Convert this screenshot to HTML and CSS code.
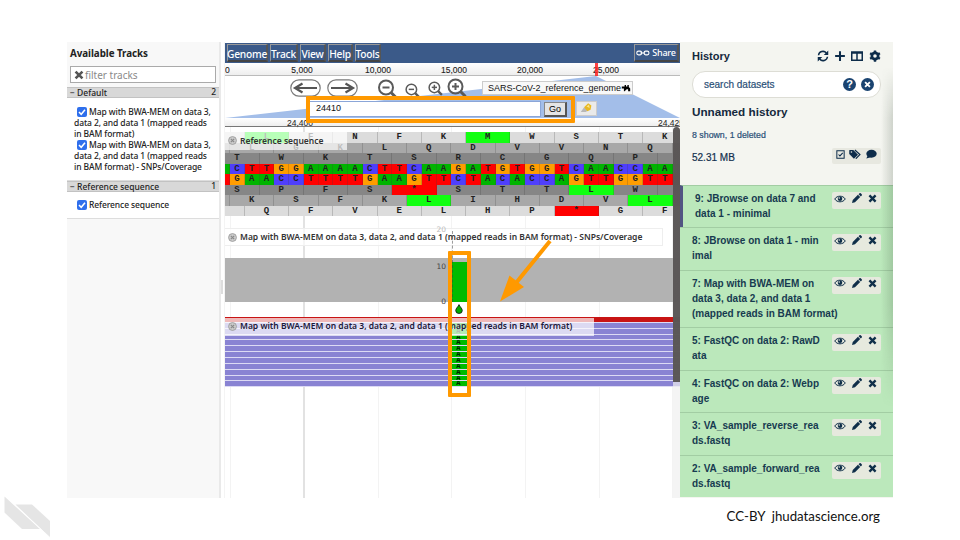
FILE: index.html
```
<!DOCTYPE html>
<html lang="en">
<head>
<meta charset="utf-8">
<title>JBrowse in Galaxy</title>
<link rel="stylesheet" href="styles.css">
</head>
<body>
<svg class="defs" width="0" height="0">
  <symbol id="eye" viewBox="0 0 24 16"><path d="M1.5 8C6 .5 18 .5 22.500 8C18 15.500 6 15.500 1.500 8Z" fill="none" stroke="currentColor" stroke-width="2"/><circle cx="12" cy="7.500" r="4.500"/><circle cx="10.500" cy="6" r="1.500" fill="#e6e9de"/></symbol>
  <symbol id="pen" viewBox="0 0 16 16"><path d="M0 16L1.200 11.200L9.500 2.900L13.100 6.500L4.800 14.800ZM10.500 1.900L12 .4Q13 -.4 14 .5L15.500 2Q16.400 3 15.600 4L14.100 5.500Z"/></symbol>
  <symbol id="times" viewBox="0 0 16 16"><path d="M2.500 2.500L13.500 13.500M13.500 2.500L2.500 13.500" stroke="currentColor" stroke-width="4.200"/></symbol>
  <symbol id="close" viewBox="0 0 16 16"><circle cx="8" cy="8" r="7" fill="#ccc" stroke="#999" stroke-width="1.500"/><path d="M5 5L11 11M11 5L5 11" stroke="#888" stroke-width="2"/></symbol>
  <symbol id="lens" viewBox="0 0 20 20"><circle cx="8.500" cy="8.500" r="7" fill="none" stroke="#5a5a5a" stroke-width="2"/><path d="M13.500 13.500L18.500 18.500" stroke="#5a5a5a" stroke-width="3"/><path d="M5 8.500H12" stroke="#5a5a5a" stroke-width="2"/></symbol>
  <symbol id="arrow" viewBox="0 0 31 18"><rect x=".8" y=".8" width="29.400" height="16.400" rx="8.200" fill="#fff" stroke="#7a7a7a" stroke-width="1.200"/><path d="M27 9H6M12.500 4.500L5 9L12.500 13.500" fill="none" stroke="#555" stroke-width="2.200"/></symbol>
</svg>
<main class="app">
  <aside class="tracks">
    <h2>Available Tracks</h2>
    <div class="filter"><svg class="x"><use href="#times"/></svg><span>filter tracks</span></div>
    <div class="cat"><span>− Default</span><b>2</b></div>
    <div class="list tall">
      <p><i class="check"><svg viewBox="0 0 10 10"><path d="M2 5L4.200 7.300L8 2.800"/></svg></i>Map with BWA-MEM on data 3,<br>data 2, and data 1 (mapped reads<br>in BAM format)</p>
      <p><i class="check"><svg viewBox="0 0 10 10"><path d="M2 5L4.200 7.300L8 2.800"/></svg></i>Map with BWA-MEM on data 3,<br>data 2, and data 1 (mapped reads<br>in BAM format) - SNPs/Coverage</p>
    </div>
    <div class="cat"><span>− Reference sequence</span><b>1</b></div>
    <div class="list short"><p><i class="check"><svg viewBox="0 0 10 10"><path d="M2 5L4.200 7.300L8 2.800"/></svg></i>Reference sequence</p></div>
  </aside>
  <div class="splitter"><i></i></div>
  <section class="browser">
    <nav class="menu">
      <span class="m1">Genome</span><span class="m2">Track</span><span class="m3">View</span><span class="m4">Help</span><span class="m5">Tools</span>
      <span class="share"><svg viewBox="0 0 26 12"><rect x="1.500" y="2.500" width="9" height="7" rx="3"/><rect x="15" y="2.500" width="9" height="7" rx="3"/><path d="M8 6H17"/></svg>Share</span>
    </nav>
    <div class="ruler"><span class="zero">0</span><span>5,000</span><span>10,000</span><span>15,000</span><span>20,000</span><span>25,000</span><i class="here"></i></div>
    <div class="nav">
      <svg class="fan" viewBox="0 0 455 42"><path d="M371 0L455 42H0Z"/></svg>
      <div class="controls">
        <svg class="pill"><use href="#arrow"/></svg><svg class="pill flip"><use href="#arrow"/></svg>
        <svg class="z1"><use href="#lens"/></svg><svg class="z2"><use href="#lens"/></svg>
        <svg class="z3" viewBox="0 0 20 20"><use href="#lens"/><path d="M8.500 5V12" stroke="#5a5a5a" stroke-width="2"/></svg>
        <svg class="z4" viewBox="0 0 20 20"><use href="#lens"/><path d="M8.500 5V12" stroke="#5a5a5a" stroke-width="2"/></svg>
        <div class="select">SARS-CoV-2_reference_genome<svg viewBox="0 0 12 10"><path d="M0 2H4V0H6V2H8V0H10V3L12 5V9H9V6H7L4 9H3V5H0Z"/></svg></div>
      </div>
      <div class="search"><div class="loc">24410</div><div class="go">Go</div><div class="marker"><svg viewBox="0 0 16 14"><path d="M1 12L5 6L10 10L7 12Z" fill="#b8b8b8"/><path d="M5 6L10 1L14 4L13 9L9 11Z" fill="#e8b820"/><path d="M8 5L11 3L12 7Z" fill="#fbe58a"/></svg></div></div>
    </div>
    <div class="scale"><span class="s1">24,400</span><span class="s2">24,425</span></div>
    <div class="view">
      <div class="seq" id="seq"></div>
      <div class="label ref"><svg><use href="#close"/></svg><span>Reference sequence</span></div>
      <div class="coverage"><i class="snp"></i></div>
      <div class="label cov"><svg><use href="#close"/></svg><span>Map with BWA-MEM on data 3, data 2, and data 1 (mapped reads in BAM format) - SNPs/Coverage</span></div>
      <span class="tick t20">20</span><span class="tick t10">10</span><span class="tick t0">0</span>
      <i class="axis"></i>
      <svg class="drop" viewBox="0 0 8 10"><path d="M4 .6C5 3 7.300 4.500 7.300 6.500A3.300 3 0 0 1 .7 6.500C.7 4.500 3 3 4 .6Z" fill="#0a0" stroke="#111" stroke-width=".8"/></svg>
      <div class="reads" id="reads"></div>
      <div class="label bam"><svg><use href="#close"/></svg><span>Map with BWA-MEM on data 3, data 2, and data 1 (mapped reads in BAM format)</span></div>
    </div>
    <i class="scroll"></i>
  </section>
  <aside class="history">
    <header><h2>History</h2>
      <svg class="h1" viewBox="0 0 16 16"><path d="M2 7A6 6 0 0 1 12.500 4M14 9A6 6 0 0 1 3.500 12" fill="none" stroke="currentColor" stroke-width="2"/><path d="M15 .8V6.800H9ZM1 15.200V9.200H7Z"/></svg>
      <svg class="h2" viewBox="0 0 16 16"><path d="M8 1.500V14.500M1.500 8H14.500" stroke="currentColor" stroke-width="2.700"/></svg>
      <svg class="h3" viewBox="0 0 16 14"><path d="M1 1.500H15V12.800H1ZM1 3H15M8 3V13" fill="none" stroke="currentColor" stroke-width="2"/></svg>
      <svg class="h4" viewBox="0 0 16 16"><circle cx="8" cy="8" r="4.200" fill="none" stroke="currentColor" stroke-width="3.600"/><path d="M8 .5V4M8 12V15.500M1.500 4.250L4.500 6M11.500 10L14.500 11.750M14.500 4.250L11.500 6M4.500 10L1.500 11.750" stroke="currentColor" stroke-width="3.200"/></svg>
    </header>
    <div class="find"><span>search datasets</span><b>?</b><b><svg><use href="#times"/></svg></b></div>
    <h3>Unnamed history</h3>
    <p class="shown">8 shown, 1 deleted</p>
    <div class="size"><span>52.31 MB</span><div class="tools">
      <svg class="k1" viewBox="0 0 16 16"><path d="M1.500 1.500H14.500V14.500H1.500ZM4.500 8L7 10.500L12 5" fill="none" stroke="currentColor" stroke-width="1.800"/></svg>
      <svg class="k2" viewBox="0 0 20 16"><path d="M0 2V8L7.500 15.500L14 9L6.500 1.500H1Z"/><path d="M9 1.500L17 9L10.500 15.500" fill="none" stroke="currentColor" stroke-width="2"/><circle cx="3.500" cy="4.800" r="1.300" fill="#e6e6de"/></svg>
      <svg class="k3" viewBox="0 0 18 16"><ellipse cx="9" cy="7.500" rx="8.500" ry="6.500"/><path d="M3 10L.5 15.500L9 13Z"/></svg></div></div>
    <div class="items" id="items"></div>
    <i class="shade"></i>
  </aside>
  <i class="frame search-frame"></i>
  <i class="frame snp-frame"></i>
  <svg class="pointer" viewBox="0 0 60 70"><path d="M54 8L20 50" stroke="#ff9900" stroke-width="4"/><path d="M4 68.500L13.500 42.500L28 54Z" fill="#ff9900"/></svg>
</main>
<svg class="mark" viewBox="0 0 50 44"><path d="M4.500 .5L40 33H22L4.500 16.500Z"/><path d="M15.500 8.500H32L50 25V41.500Z"/><path class="cut" d="M4.500 -.5L50 41.500"/></svg>
<footer>CC-BY&nbsp; jhudatascience.org</footer>
<script src="main.js"></script>
</body>
</html>
```
FILE: styles.css
```
* { box-sizing: border-box; }
body { margin: 0; width: 960px; height: 540px; overflow: hidden; background: #fff; font-family: "Liberation Sans", sans-serif; position: relative; }
h2, h3, p { margin: 0; }
i { font-style: normal; }
.defs { position: absolute; }
.app { display: flex; position: absolute; left: 67px; top: 42px; width: 826px; height: 456px; }

.tracks { width: 152px; background: #f8f8f8; font-family: "Noto Sans", sans-serif; color: #222; font-size: 9px; }
.tracks h2 { font-size: 9.8px; line-height: 14px; padding: 5px 0 0 3px; height: 24px; white-space: nowrap; font-weight: 700; letter-spacing: -.05px; }
.filter { margin: 0 3px 4px; height: 17px; width: 146px; background: #fff; border: 1px solid #aaa; display: flex; align-items: center; color: #8a8a8a; font-size: 10px; }
.filter .x { width: 10px; height: 10px; margin: 0 1px 0 3px; color: #555; }
.cat { height: 11px; background: #d8d8d8; border-top: 1px solid #c2c2c2; border-bottom: 1px solid #c2c2c2; display: flex; justify-content: space-between; line-height: 10px; padding: 0 3px; font-size: 8.5px; font-weight: 500; }
.cat b { font-weight: 500; margin-top: -1px; }
.list { background: #fff; font-size: 8.5px; line-height: 11px; letter-spacing: -.1px; white-space: nowrap; font-weight: 500; padding-left: 7px; border-bottom: 1px solid #ddd; }
.tall { height: 83px; padding-top: 8px; }
.short { height: 27px; padding-top: 7px; }
.check { display: inline-block; width: 10px; height: 10px; border-radius: 2px; background: #2f6fec; margin: 0 2px 0 3px; vertical-align: -2px; }
.check svg { display: block; fill: none; stroke: #fff; stroke-width: 1.5; }
.splitter { width: 6px; background: #fff; border-left: 2px solid #e9e9e9; border-right: 1px solid #f4f4f4; padding-top: 238px; }
.splitter i { display: block; width: 2px; height: 14px; background: #ddd; }

.browser { width: 455px; position: relative; overflow: hidden; background: #fff; }
.menu { height: 20px; margin-top: 1px; background: #3b5a89; display: flex; gap: 2px; padding: 1px 1px 1px 2px; color: #fff; font: 500 10.2px/18px "Noto Sans", sans-serif; }
.menu span { border: 1px solid #999; border-right: 2px solid #555; border-bottom: 2px solid #444; display: flex; justify-content: center; white-space: nowrap; letter-spacing: -.2px; }
.m1 { width: 41px; } .m2 { width: 28px; } .m3 { width: 26px; } .m4 { width: 25px; } .m5 { width: 26px; }
.menu .share { width: 45px; margin-left: auto; font-size: 9px; align-items: center; gap: 2px; }
.share svg { width: 14px; height: 8px; fill: none; stroke: #fff; stroke-width: 2; }
.ruler { position: relative; height: 13px; margin: 0; background: linear-gradient(#fff, #eee); border-bottom: 1px solid #bbb; display: flex; font-size: 8.5px; line-height: 14px; color: #222; }
.ruler span { width: 76px; flex: none; text-align: center; -webkit-text-stroke: .1px; }
.ruler .zero { width: 39px; text-align: left; }
.here { position: absolute; left: 370px; top: 0; width: 3px; height: 13px; background: #f22; opacity: .85; }
.nav { height: 42px; position: relative; }
.fan { position: absolute; width: 455px; height: 42px; fill: #a3bee9; }
.controls { position: relative; height: 25px; padding: 3px 0 0 65px; display: flex; }
.pill { width: 31px; height: 18px; margin-right: 6px; }
.flip { transform: scaleX(-1); }
.z1, .z4 { width: 20px; height: 20px; }
.z1 { margin-left: 13px; width: 21px; }
.z2, .z3 { width: 15px; height: 15px; margin-top: 4px; }
.z2 { margin-left: 7px; }
.z3 { margin-left: 8px; margin-top: 2px; }
.z4 { margin: -1px 0 0 4px; }
.select { margin: 2px 0 0 15px; width: 151px; height: 14px; background: #f8f8f8; border: 1px solid #ccc; font-size: 9px; line-height: 13px; padding-left: 5px; white-space: nowrap; display: flex; align-items: center; color: #111; }
.select svg { width: 10px; height: 7px; margin-left: 0; flex: none; }
.search { position: relative; display: flex; gap: 3px; padding-left: 82px; height: 16px; }
.loc { width: 234px; background: #fff; border: 1px solid #8ba6d8; font-size: 9px; line-height: 13px; padding-left: 8px; color: #111; }
.go { width: 23px; border: 1px solid #888; border-right: 2px solid #555; border-bottom: 2px solid #555; background: #e4e4e4; font-size: 9px; line-height: 13px; text-align: center; margin-top: 1px; }
.marker { width: 21px; height: 15px; margin-left: 6px; background: #eaeaea; border: 1px solid #ccc; }
.marker svg { width: 13px; height: 12px; display: block; margin: 0 auto; }
.scale { height: 9px; border-bottom: 1px solid #777; background: linear-gradient(#fff, #eee); display: flex; font-size: 8.5px; line-height: 10px; color: #222; justify-content: space-between; white-space: nowrap; }
.s1 { padding-left: 62px; } .s2 { margin-right: -4px; }
.view { position: relative; height: 371px; padding-top: 5px; background:
  linear-gradient(#e2e2e2, #e2e2e2) 78px 0 / 2px 100% no-repeat,
  repeating-linear-gradient(90deg, transparent 0 5px, #f3f3f3 5px 6px, transparent 6px 73.75px); }
.seq { height: 84px; overflow: hidden; font: 700 9px/10.5px "Liberation Mono", monospace; color: #222; }
.row { display: flex; height: 10.5px; }
.row span { flex: none; width: 44.25px; border-right: 1px solid rgba(60,60,60,.22); text-align: center; height: 10.5px; }
.f1 { margin-left: -24.5px; background: #dcdcdc; }
.f2 { margin-left: -39.25px; background: #a8a8a8; }
.f3 { margin-left: -9.75px; background: #868686; }
.row .start { background: #1f1; }
.row .stop { background: #f00; }
.dna { margin-left: -9.75px; }
.row.dna span { width: 14.75px; }
.A { background: #00b400; } .C { background: #4f3ffc; } .G { background: #ff9d00; } .T { background: #f00; }
.label { position: absolute; left: 0; height: 18px; background: rgba(255,255,255,.7); display: flex; align-items: center; gap: 3px; padding-left: 3px; font: 600 8.5px/18px "Noto Sans", sans-serif; color: #333; white-space: nowrap; }
.label svg { width: 9px; height: 9px; flex: none; }
.ref { top: 5px; width: 122px; padding-bottom: 1px; }
.cov { top: 101px; width: 438px; border: 1px solid #eee; border-left: 0; }
.bam { top: 190.5px; width: 369px; color: #1d1838; padding-bottom: 1px; }
.coverage { margin-top: 42px; height: 44px; background: #b2b2b2; padding: 3.5px 0 0 227px; }
.snp { display: block; width: 14.5px; height: 40.5px; background: #0b0; }
.tick { position: absolute; right: 234px; font: 7.5px/8px "DejaVu Sans", sans-serif; color: #444; }
.t20 { top: 99px; color: #bbb; } .t10 { top: 136px; } .t0 { top: 171px; }
.axis { position: absolute; left: 226.5px; top: 104px; height: 71px; border-left: 1px dashed rgba(60,60,60,.5); }
.drop { position: absolute; left: 229.5px; top: 177px; width: 8px; height: 10px; }
.reads { margin-top: 15px; }
.read { height: 5.86px; border-bottom: .9px solid #dcdaf4; background: #8983d3; background-clip: padding-box; padding-left: 227px; overflow: hidden; }
.read.red { background: #c81414; }
.read b { display: block; width: 14.5px; height: 100%; background: #0b0; font: 700 7px/5.5px "Liberation Mono", monospace; text-align: center; color: #020; padding-right: 2px; }
.scroll { position: absolute; left: 448px; top: 85px; width: 7px; height: 413px; background: linear-gradient(rgba(82,78,78,.93), rgba(82,78,78,.93)) 0 0 / 7px 255px no-repeat, rgba(240,240,240,.7); border-radius: 4px 4px 0 0; }

.history { width: 213px; background: #f4f5f0; position: relative; color: #12304e; overflow: hidden; }
.history header { height: 28px; display: flex; align-items: center; padding-left: 12px; }
.history h2 { font-size: 11px; width: 125px; color: #14293d; }
.history header svg { color: #0d2c4a; }
.h1, .h2, .h3, .h4 { width: 12px; height: 12px; margin-right: 5px; fill: currentColor; }
.h3 { margin-right: 6px; }
.find { margin: 1px 0 0 12px; width: 189px; height: 27px; border: 1px solid #ddddd5; border-radius: 13px; background: #fff; display: flex; align-items: center; gap: 5px; padding: 0 6px 0 11px; font-size: 10px; color: #2a5077; }
.find span { margin-right: auto; -webkit-text-stroke: .2px; }
.find b { width: 13px; height: 13px; border-radius: 50%; background: #1a4370; color: #fff; font-size: 11px; line-height: 13px; text-align: center; }
.find svg { width: 7px; height: 7px; display: block; margin: 3px; color: #fff; }
.history h3 { font-size: 11.7px; line-height: 16px; margin: 6px 0 0 12px; color: #14293d; }
.shown { font-size: 8.8px; line-height: 12px; margin: 9px 0 0 12px; color: #2a5077; -webkit-text-stroke: .2px; }
.size { display: flex; justify-content: space-between; padding: 7px 12px 0; height: 44px; font-size: 10px; line-height: 20px; }
.size > span { -webkit-text-stroke: .2px; }
.tools { width: 49px; height: 16px; background: #e7e8e0; border-radius: 2px; display: flex; align-items: center; justify-content: space-between; padding: 0 4px 4px; fill: #0d2c4a; color: #0d2c4a; }
.k1 { width: 9px; height: 9px; } .k2 { width: 13px; height: 10px; } .k3 { width: 11px; height: 10px; }
.item { background: #bbe8bb; border-top: 1px solid #a2cda3; height: 42.4px; padding: 5px 12px 0; display: flex; justify-content: space-between; font: 700 10px/15px "Liberation Sans", sans-serif; white-space: nowrap; color: #173b50; }
.item.three { height: 57.6px; }
.item.active { border-left: 3px solid #515582; }
.item .title { width: 129px; }
.acts { flex: none; width: 49px; height: 17px; background: #e6e9de; border-radius: 2px; margin-top: 1px; padding: 1px 4px 0 2px; display: flex; justify-content: space-between; fill: #0f2f49; color: #0f2f49; }
.acts svg { margin-top: 1px; width: 9px; height: 9px; }
.acts svg:first-child { width: 12px; height: 8px; margin-top: 1.5px; }
.acts svg:nth-child(2) { width: 10px; height: 10px; margin-top: 0; }
.shade { position: absolute; right: 0; top: 25px; width: 12px; height: 340px; background: linear-gradient(90deg, transparent, rgba(60,80,60,.2)); -webkit-mask-image: linear-gradient(transparent, #000 15%, #000 70%, transparent); mask-image: linear-gradient(transparent, #000 15%, #000 70%, transparent); }

.frame { position: absolute; border: 4px solid #ff9900; border-radius: 1px; }
.search-frame { left: 239px; top: 54px; width: 269px; height: 27px; }
.snp-frame { left: 380.5px; top: 208.5px; width: 23px; height: 146px; }
.pointer { position: absolute; left: 429px; top: 190.5px; width: 60px; height: 70px; }
.mark { position: absolute; left: 0; top: 496px; width: 50px; height: 44px; fill: #e5e5e5; }
.mark .cut { stroke: #fff; stroke-width: .8; }
footer { position: absolute; right: 80px; top: 507px; font: 13.25px/18px Lato, sans-serif; color: #111; white-space: nowrap; }
```
FILE: main.js
```
// Translation frames around the two strands; lower case marks start codons.
const frames = [
  ["f1", " lFNFKmWSTK"], ["f2", " LGKLQDVVNQ "], ["f3", "TWKTSRCGQP "],
  ["dna", "ACTTGGAAAACTTCAAGATGTGGTCAACCAAA"],
  ["dna", "TGAACCTTTTGAAGTTCTACACCAGTTGGTTT"],
  ["f3", "SPFS*STTlW "], ["f2", " KSFKlIHDVl "], ["f1", " QFVELHP*GF"]
];
document.getElementById("seq").innerHTML = frames.map(([kind, letters]) =>
  `<div class="row ${kind}">` + [...letters].map((c, i) => {
    const cls = kind === "dna" ? c : c === "*" ? "stop" : /[a-z]/.test(c) ? "start" : "";
    const edge = kind === "dna" && (i === 0 || i === letters.length - 1);
    return `<span class="${cls}">${edge ? "" : c.toUpperCase()}</span>`;
  }).join("") + "</div>").join("");

document.getElementById("reads").innerHTML =
  '<div class="read red"></div>' + '<div class="read"><b>A</b></div>'.repeat(11);

const items = [
  ["9: JBrowse on data 7 and<br>data 1 - minimal", "active"],
  ["8: JBrowse on data 1 - min<br>imal", ""],
  ["7: Map with BWA-MEM on<br>data 3, data 2, and data 1<br>(mapped reads in BAM format)", "three"],
  ["5: FastQC on data 2: RawD<br>ata", ""],
  ["4: FastQC on data 2: Webp<br>age", ""],
  ["3: VA_sample_reverse_rea<br>ds.fastq", ""],
  ["2: VA_sample_forward_rea<br>ds.fastq", ""]
];
document.getElementById("items").innerHTML = items.map(([title, cls]) =>
  `<div class="item ${cls}"><div class="title">${title}</div><div class="acts">` +
  ["eye", "pen", "times"].map(n => `<svg><use href="#${n}"/></svg>`).join("") +
  "</div></div>").join("");
```
